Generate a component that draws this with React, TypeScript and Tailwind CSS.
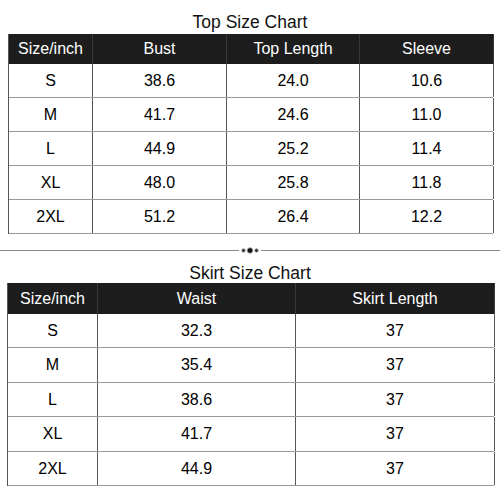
const topRows = [
  ["S", "38.6", "24.0", "10.6"],
  ["M", "41.7", "24.6", "11.0"],
  ["L", "44.9", "25.2", "11.4"],
  ["XL", "48.0", "25.8", "11.8"],
  ["2XL", "51.2", "26.4", "12.2"],
]

const skirtRows = [
  ["S", "32.3", "37"],
  ["M", "35.4", "37"],
  ["L", "38.6", "37"],
  ["XL", "41.7", "37"],
  ["2XL", "44.9", "37"],
]

const skirtHeights = ["h-[34px]", "h-[35px]", "h-[34px]", "h-[35px]", "h-[34px]"]

function Divider() {
  return (
    <div className="flex items-center h-[7px] mt-[13px]">
      <div className="flex-1 h-px bg-[#8a8a8a]" />
      <svg width="22" height="7" viewBox="0 0 22 7" className="shrink-0">
        <circle cx="4.5" cy="3.5" r="1.8" fill="#333" stroke="#999" strokeWidth="0.8" />
        <circle cx="11" cy="3.5" r="2.8" fill="#111" stroke="#aaa" strokeWidth="0.8" />
        <circle cx="17.5" cy="3.5" r="1.8" fill="#333" stroke="#999" strokeWidth="0.8" />
      </svg>
      <div className="flex-1 h-px bg-[#8a8a8a]" />
    </div>
  )
}

export default function App() {
  return (
    <div
      className="w-[500px] h-[500px] bg-white text-black overflow-hidden"
      style={{ fontFamily: '"Liberation Sans", Arial, sans-serif' }}
    >
      {/* Top chart */}
      <h2 className="mt-[12px] h-[20px] leading-[20px] text-center text-[17.5px] text-[#111]">Top Size Chart</h2>
      <div className="mt-[2px] ml-[8px] w-[485px] border-l border-[#555]">
        <div className="grid grid-cols-[84px_134px_133px_134px] h-[30px] bg-[#1d1d1d] text-white text-[16px]">
          {["Size/inch", "Bust", "Top Length", "Sleeve"].map((h, i) => (
            <div key={i} className="flex items-center justify-center border-r border-[#3a3a3a]">
              {h}
            </div>
          ))}
        </div>
        {topRows.map((row, r) => (
          <div key={r} className="grid grid-cols-[84px_134px_133px_134px] h-[34px] text-[16px] border-b border-[#9a9a9a]">
            {row.map((c, i) => (
              <div key={i} className="flex items-center justify-center border-r border-[#555]">
                {c}
              </div>
            ))}
          </div>
        ))}
      </div>

      <Divider />

      {/* Skirt chart */}
      <h2 className="mt-[9px] h-[20px] leading-[20px] text-center text-[17.5px] text-[#111]">Skirt Size Chart</h2>
      <div className="ml-[7px] w-[487px] border-l border-[#555]">
        <div className="grid grid-cols-[90px_198px_199px] h-[31px] bg-[#1d1d1d] text-white text-[16px]">
          {["Size/inch", "Waist", "Skirt Length"].map((h, i) => (
            <div key={i} className="flex items-center justify-center border-r border-[#3a3a3a]">
              {h}
            </div>
          ))}
        </div>
        {skirtRows.map((row, r) => (
          <div
            key={r}
            className={`grid grid-cols-[90px_198px_199px] text-[16px] border-b border-[#9a9a9a] ${skirtHeights[r]}`}
          >
            {row.map((c, i) => (
              <div key={i} className="flex items-center justify-center border-r border-[#555]">
                {c}
              </div>
            ))}
          </div>
        ))}
      </div>
    </div>
  )
}
